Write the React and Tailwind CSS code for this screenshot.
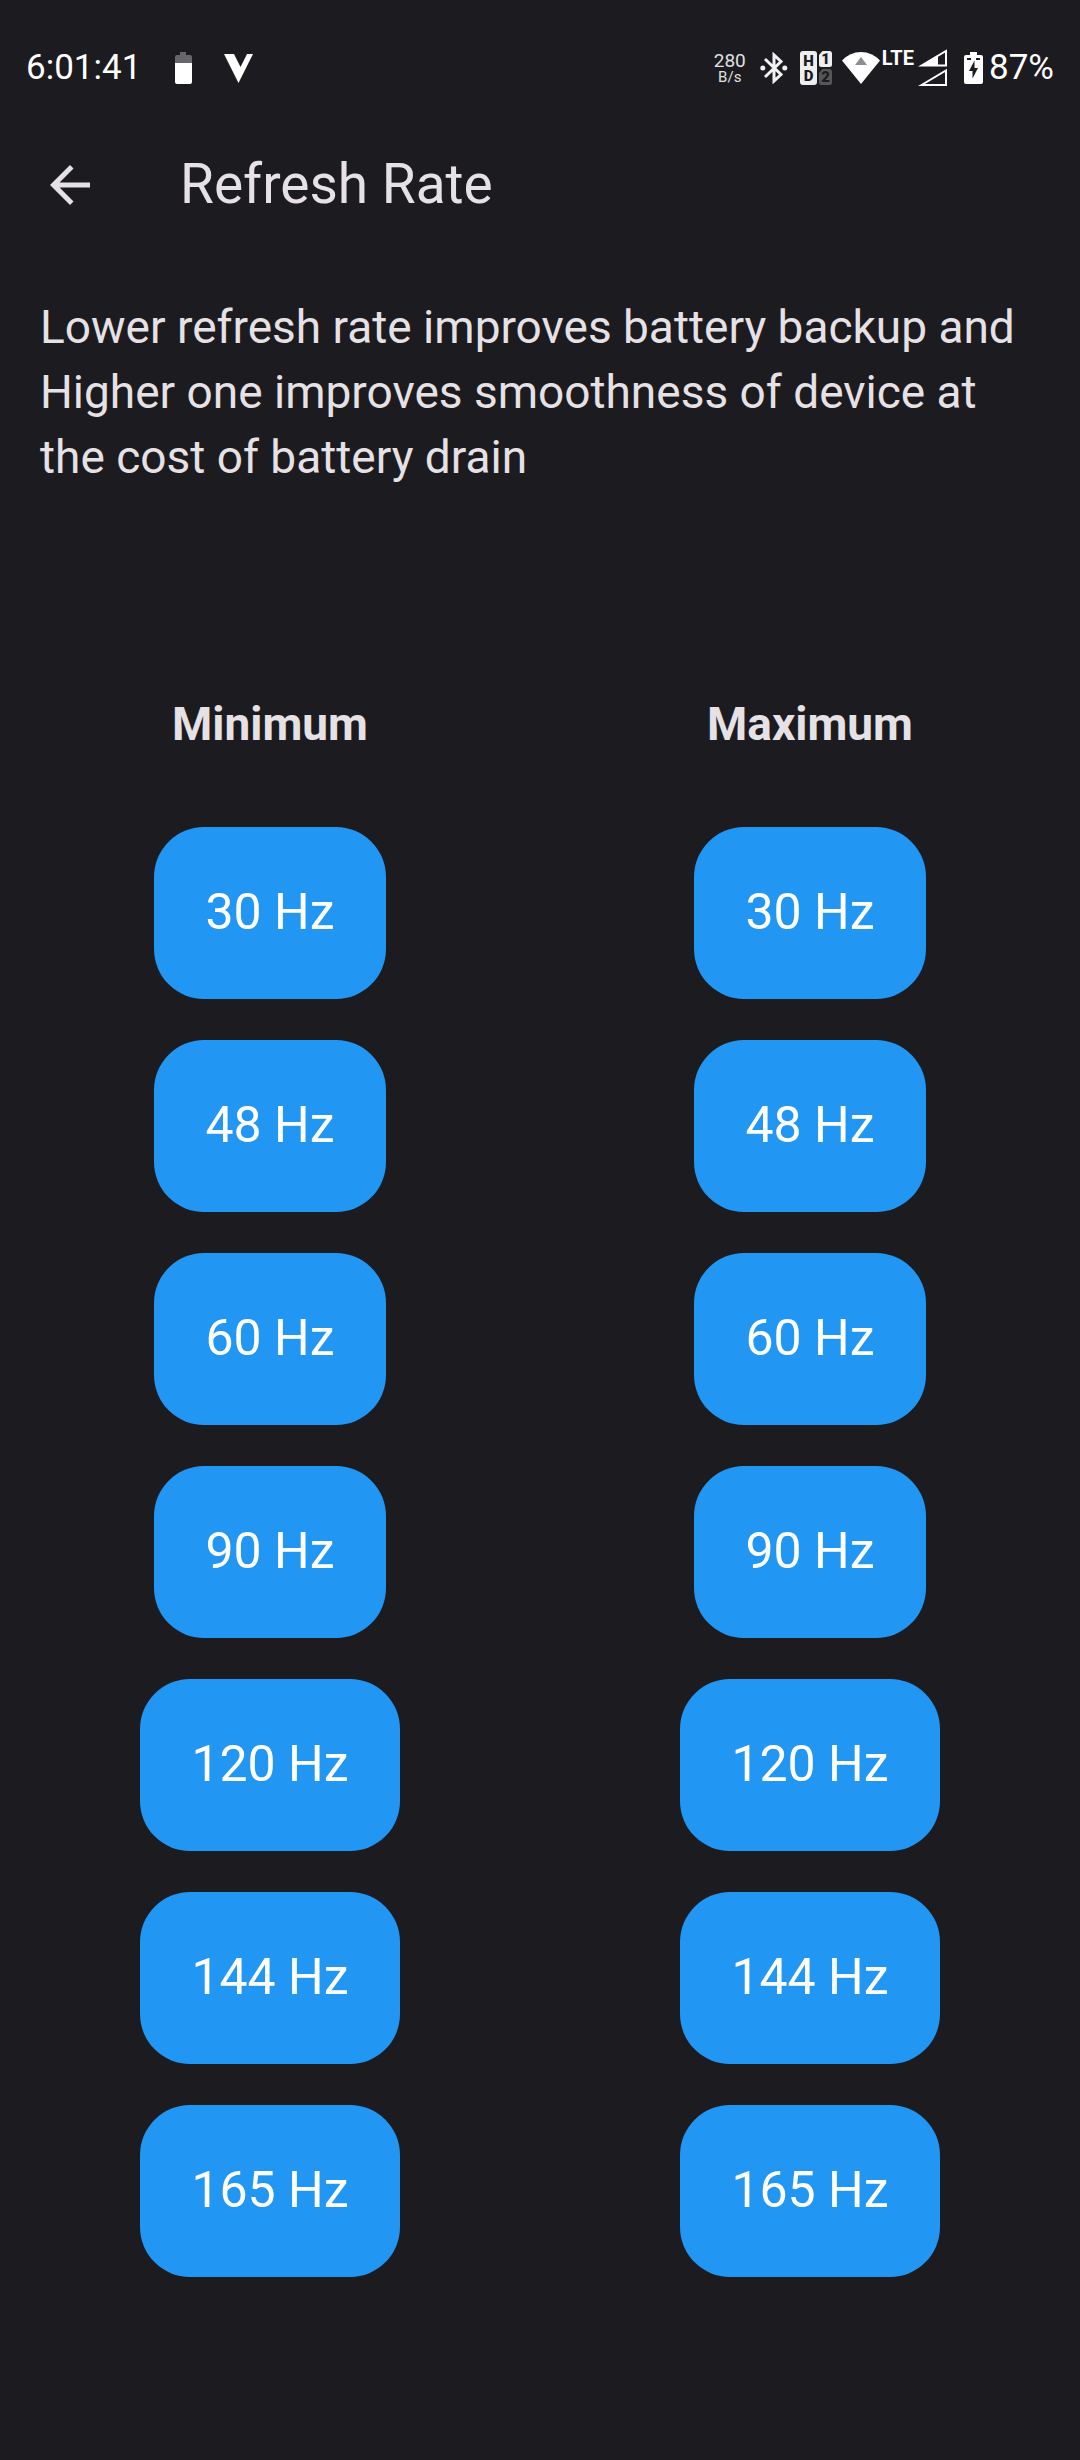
const RATES = [30, 48, 60, 90, 120, 144, 165];

function BatteryLevelIcon() {
  return (
    <svg className="h-8 w-[17px]" viewBox="0 0 17 32" aria-hidden="true">
      <path d="M5 0h6v3h4q2 0 2 2v6H0V5q0-2 2-2h3z" fill="#676669" />
      <path d="M0 11h17v19q0 2-2 2H2q-2 0-2-2z" fill="#fff" />
    </svg>
  );
}

function VIcon() {
  return (
    <svg className="h-[29px] w-[29px]" viewBox="0 0 29 29" aria-hidden="true">
      <path d="M0 0h10l6.500 13L23 0h6L14.500 29z" fill="#fff" />
    </svg>
  );
}

function BluetoothIcon() {
  return (
    <svg className="h-8 w-7" viewBox="0 0 28 32" aria-hidden="true">
      <path d="M5 7l16 15.500-7 6.500V3l7 6.500L5 25" fill="none" stroke="#f2f2f2" strokeWidth="3" />
      <circle cx="2.800" cy="16" r="2.500" fill="#f2f2f2" />
      <circle cx="24.800" cy="16" r="2.500" fill="#f2f2f2" />
    </svg>
  );
}

function HdSimIcon() {
  return (
    <svg className="h-[34px] w-8" viewBox="0 0 32 34" aria-label="HD SIM 1">
      <rect width="17" height="34" rx="3" fill="#eee" />
      <path d="M22.500 0h7Q32 0 32 2.500v11q0 2.500-2.500 2.500h-8Q19 16 19 13.500V4z" fill="#eee" />
      <path d="M22.500 18h7q2.500 0 2.500 2.500v11q0 2.500-2.500 2.500h-8Q19 34 19 31.500V22z" fill="#565558" />
      <g fontFamily="Roboto, sans-serif" fontWeight="900" fontSize="15" textAnchor="middle" fill="#1c1b1f">
        <text x="8.500" y="15">H</text>
        <text x="8.500" y="30">D</text>
        <text x="25.500" y="13">1</text>
        <text x="25.500" y="31">2</text>
      </g>
    </svg>
  );
}

function WifiIcon() {
  return (
    <svg className="h-8 w-[38px]" viewBox="0 0 38 32" aria-hidden="true">
      <path d="M0 8.500Q8 0 19 0t19 8.500L19 32z" fill="#fff" />
      <path d="M19 5l6 8H13z" fill="#8e8d8f" />
    </svg>
  );
}

function SignalIcon() {
  return (
    <svg className="h-[38px] w-[30px]" viewBox="0 0 30 38" aria-hidden="true">
      <path d="M3.500 16.500L28 2v14.500z" fill="none" stroke="#fff" strokeWidth="2" />
      <path d="M2 17L20 6v11z" fill="#fff" />
      <path d="M3.500 36L28 21.500V36z" fill="none" stroke="#fff" strokeWidth="2" />
    </svg>
  );
}

function ChargingIcon() {
  return (
    <svg className="h-8 w-[19px]" viewBox="0 0 19 32" aria-hidden="true">
      <path d="M6 0h7v3h4q2 0 2 2v25q0 2-2 2H2q-2 0-2-2V5q0-2 2-2h4z" fill="#fff" />
      <path d="M3 6h4v2H3zM12 6h4v2h-4z" fill="#1c1b1f" />
      <path d="M10.500 8.500v7.500H14L8.500 26.500V19H5z" fill="#1c1b1f" />
    </svg>
  );
}

function StatusBar() {
  return (
    <div className="flex h-[115px] items-center justify-between px-[26px] pt-[21px] text-white">
      <div className="flex items-center">
        <span className="text-[35px] leading-[42px]">6:01:41</span>
        <span className="ml-[34px] flex items-center gap-8">
          <BatteryLevelIcon />
          <VIcon />
        </span>
      </div>
      <div className="flex items-center">
        <div className="flex flex-col items-center text-[#e0e0e0]">
          <span className="text-[19px] leading-[18px]">280</span>
          <span className="text-[15px] leading-[15px]">B/s</span>
        </div>
        <div className="ml-3.5 flex items-center gap-3">
          <BluetoothIcon />
          <HdSimIcon />
        </div>
        <span className="ml-2.5 flex"><WifiIcon /></span>
        <span className="mb-5 ml-0.5 text-[20px] leading-[20px] font-bold">LTE</span>
        <span className="ml-1 flex"><SignalIcon /></span>
        <span className="ml-4 flex"><ChargingIcon /></span>
        <span className="ml-1.5 text-[35px] leading-[42px]">87%</span>
      </div>
    </div>
  );
}

function RateColumn({ title }) {
  return (
    <section className="flex flex-col items-center" aria-label={title}>
      <h2 className="text-[46px] leading-[65px] font-bold">{title}</h2>
      <div className="mt-[70px] flex flex-col items-center gap-[41px]">
        {RATES.map((rate) => (
          <button
            key={rate}
            type="button"
            className="h-[172px] rounded-[50px] bg-[#2196f3] px-[51px] pb-0.5 text-[50px] leading-[72px] text-white"
          >
            {rate} Hz
          </button>
        ))}
      </div>
    </section>
  );
}

export default function App() {
  return (
    <div className="min-h-screen bg-[#1c1b1f] font-['Roboto',sans-serif] text-[#e6e1e5]">
      <StatusBar />
      <header className="flex h-[140px] items-center px-10">
        <button type="button" aria-label="Back" className="size-[60px]">
          <svg viewBox="0 0 24 24" fill="currentColor" aria-hidden="true">
            <path d="M20 11H7.830l5.590-5.590L12 4l-8 8 8 8 1.410-1.410L7.830 13H20v-2z" />
          </svg>
        </button>
        <h1 className="ml-20 pb-0.5 text-[55px] leading-[70px]">Refresh Rate</h1>
      </header>
      <main>
        <p className="px-10 pt-10 text-[46px] leading-[65px]">
          Lower refresh rate improves battery backup and Higher one improves smoothness of device at the cost of
          battery drain
        </p>
        <div className="mt-[202px] grid grid-cols-2">
          <RateColumn title="Minimum" />
          <RateColumn title="Maximum" />
        </div>
      </main>
    </div>
  );
}
